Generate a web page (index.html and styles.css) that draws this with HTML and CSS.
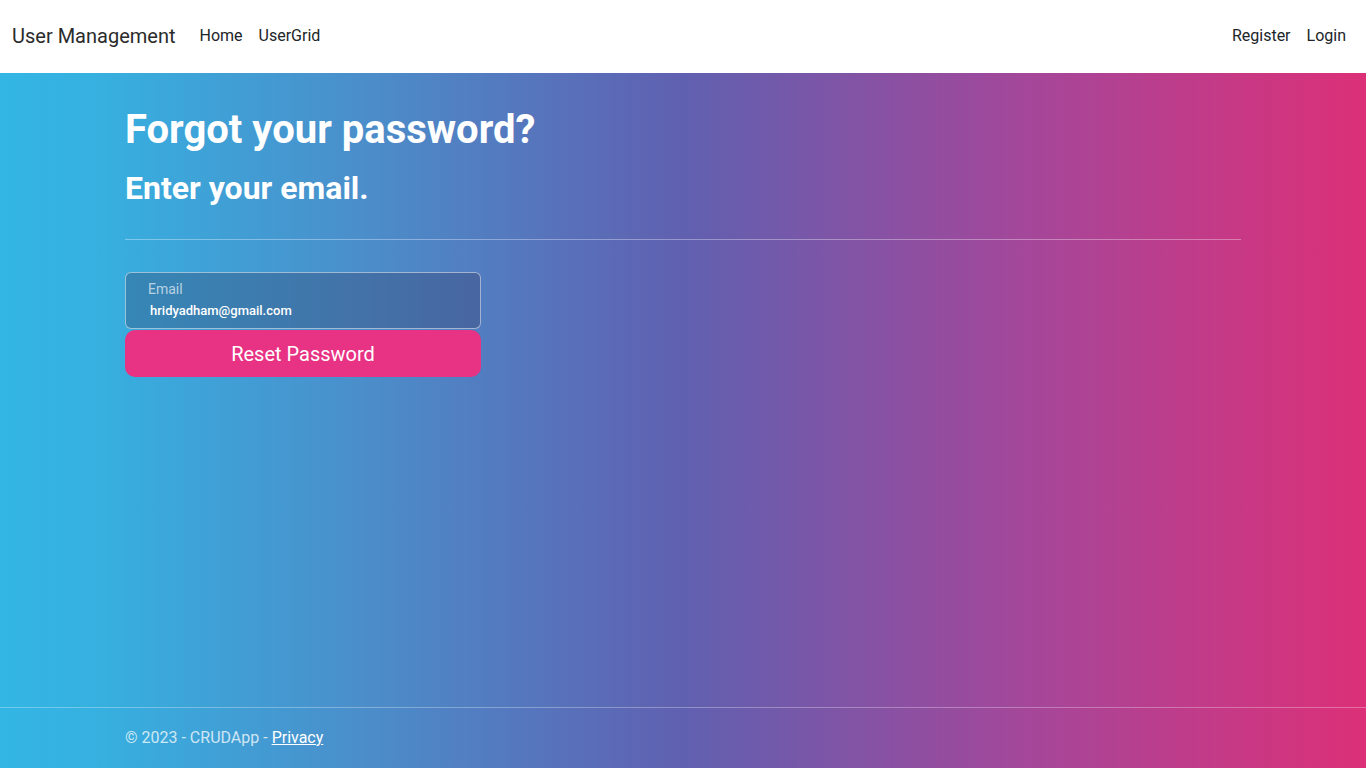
FILE: index.html
```html
<!DOCTYPE html>
<html lang="en">
<head>
<meta charset="utf-8">
<title>Forgot your password? - User Management</title>
<link rel="stylesheet" href="styles.css">
</head>
<body>
<header class="navbar">
  <div class="nav-left">
    <a class="brand" href="#">User Management</a>
    <nav class="nav-links">
      <a href="#">Home</a>
      <a href="#">UserGrid</a>
    </nav>
  </div>
  <nav class="nav-links">
    <a href="#">Register</a>
    <a href="#">Login</a>
  </nav>
</header>
<main class="page">
  <div class="container">
    <h1 class="title">Forgot your password?</h1>
    <h2 class="subtitle">Enter your email.</h2>
    <hr class="divider">
    <form class="form">
      <div class="field">
        <label class="field-label">Email</label>
        <div class="field-value">hridyadham@gmail.com</div>
      </div>
      <button type="button" class="btn">Reset Password</button>
    </form>
  </div>
  <footer class="footer">
    <div class="container">© 2023 - CRUDApp - <a href="#">Privacy</a></div>
  </footer>
</main>
</body>
</html>
```

FILE: styles.css
```css
* { box-sizing: border-box; }
html, body { height: 100%; }
body {
  margin: 0;
  font-family: Roboto, "Liberation Sans", sans-serif;
  display: flex;
  flex-direction: column;
  background: linear-gradient(to right, #33b6e4 0%, #36b0e0 7%, #4a8fcb 26%, #6060b0 50%, #a4479a 75%, #dc3078 100%);
}
a { text-decoration: none; }
.navbar {
  height: 73px;
  flex: none;
  background: #fff;
  display: flex;
  align-items: center;
  justify-content: space-between;
  padding: 0 12px 2px;
}
.nav-left { display: flex; align-items: center; }
.brand {
  font-size: 20px;
  color: #2b2b2b;
  margin-right: 16px;
}
.nav-links { display: flex; }
.nav-links a {
  font-size: 16px;
  color: #212529;
  padding: 8px;
}
.page {
  flex: 1;
  display: flex;
  flex-direction: column;
  justify-content: space-between;
  color: #fff;
}
.container {
  width: 1116px;
  margin: 0 auto;
}
.title {
  margin: 33px 0 0;
  font-size: 40px;
  font-weight: 700;
  line-height: 1.2;
}
.subtitle {
  margin: 15px 0 0;
  font-size: 32px;
  font-weight: 700;
  line-height: 1.2;
}
.divider {
  margin: 32px 0 32px;
  border: 0;
  border-top: 1px solid rgba(255,255,255,0.35);
}
.form { width: 356px; }
.field {
  height: 57px;
  border: 1px solid rgba(255,255,255,0.5);
  border-radius: 6px;
  background: rgba(50,50,90,0.3);
  padding: 8px 24px 0 22px;
}
.field-label {
  display: block;
  font-size: 14px;
  color: rgba(255,255,255,0.65);
  line-height: 16px;
}
.field-value {
  margin-top: 6px;
  padding-left: 2px;
  font-size: 13px;
  font-weight: 500;
  color: #fff;
  line-height: 16px;
}
.btn {
  display: block;
  width: 100%;
  height: 47px;
  margin-top: 1px;
  border: 0;
  border-radius: 10px;
  background: #e83283;
  color: #fff;
  font-family: Roboto, "Liberation Sans", sans-serif;
  font-size: 20px;
}
.footer {
  border-top: 1px solid rgba(255,255,255,0.3);
  height: 61px;
  padding-top: 20px;
  font-size: 16px;
  color: rgba(255,255,255,0.75);
}
.footer a { color: #fff; text-decoration: underline; }
```
